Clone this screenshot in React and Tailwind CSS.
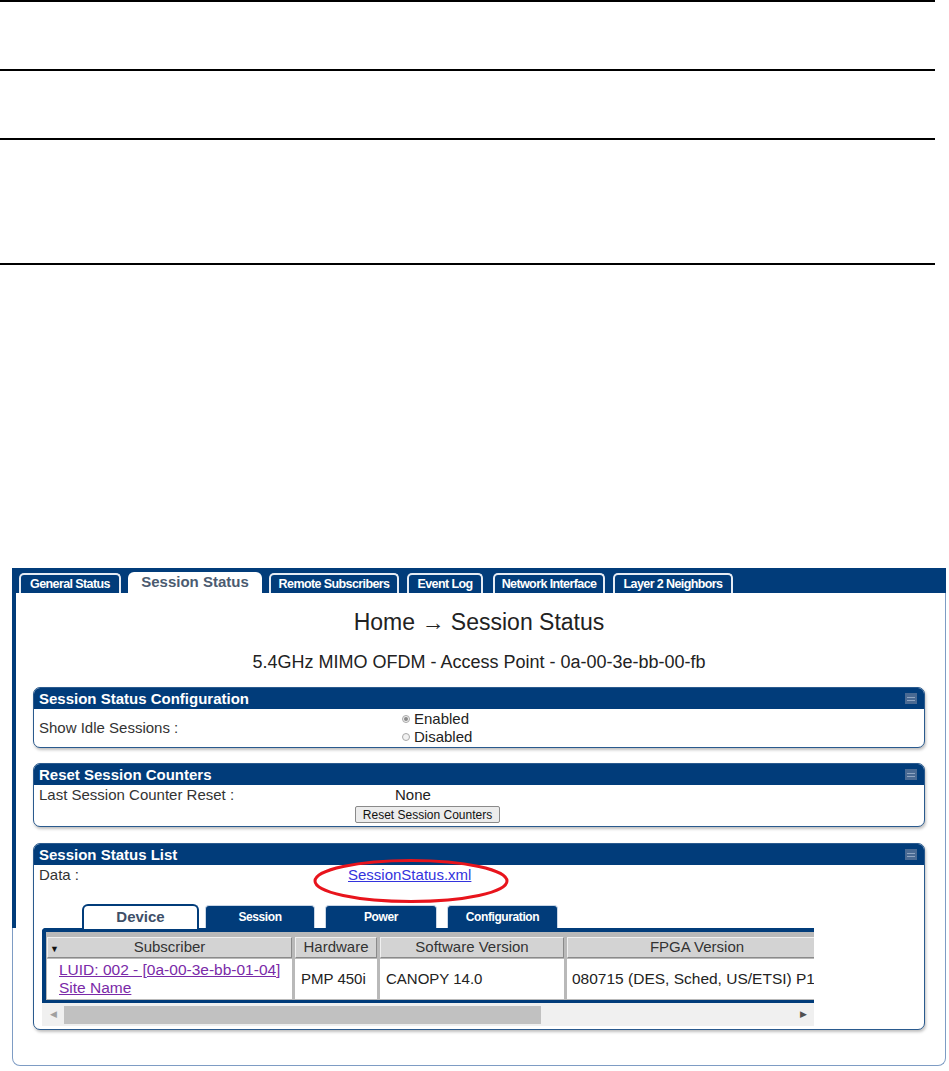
import { Fragment } from 'react'

const TOP_TABS = [
  { label: 'General Status',     w: 102, ml: 7 },
  { label: 'Session Status',     w: 134, ml: 7, active: true },
  { label: 'Remote Subscribers', w: 130, ml: 7 },
  { label: 'Event Log',          w: 76,  ml: 8 },
  { label: 'Network Interface',  w: 112, ml: 10 },
  { label: 'Layer 2 Neighbors',  w: 120, ml: 8 },
]

const SUB_TABS = [
  { label: 'Device',        w: 117, ml: 48, active: true },
  { label: 'Session',       w: 110, ml: 6 },
  { label: 'Power',         w: 112, ml: 10 },
  { label: 'Configuration', w: 111, ml: 10 },
]

const COLS = [
  { label: 'Subscriber',       w: 245 },
  { label: 'Hardware',         w: 82 },
  { label: 'Software Version', w: 184 },
  { label: 'FPGA Version',     w: 260 },
]

function Panel({ title, children }) {
  return (
    <div className="mx-[20px] rounded-[7px] border border-[#2a5a8e] bg-white shadow-[1px_2px_3px_rgba(0,0,0,0.25)] overflow-hidden">
      <div className="h-[21px] bg-[#013c7a] flex items-center justify-between pl-[5px] pr-[7px]">
        <span className="text-white text-[15px] font-bold leading-none">{title}</span>
        <span className="w-[12px] h-[11px] bg-[#4a6a93] flex flex-col justify-center items-center gap-[2px]">
          <span className="w-[8px] h-px bg-[#8fa5c2]" />
          <span className="w-[8px] h-px bg-[#8fa5c2]" />
        </span>
      </div>
      {children}
    </div>
  )
}

function Radio({ checked, label }) {
  return (
    <div className="flex items-center h-[18px] gap-[4px]">
      <span className="w-[8px] h-[8px] rounded-full border border-[#a8a8a8] bg-[#f2f2f2] flex items-center justify-center">
        {checked && <span className="w-[4px] h-[4px] rounded-full bg-[#8a8a8a]" />}
      </span>
      <span className="text-[15px] text-[#222]">{label}</span>
    </div>
  )
}

export default function App() {
  return (
    <div className="w-[949px] h-[1071px] bg-white overflow-hidden" style={{ fontFamily: '"Liberation Sans", Arial, sans-serif' }}>
      {/* page rules */}
      <div className="w-[935px] h-[2px] bg-black" />
      <div className="h-[67px]" />
      <div className="w-[935px] h-[2px] bg-black" />
      <div className="h-[67px]" />
      <div className="w-[935px] h-[2px] bg-black" />
      <div className="h-[123px]" />
      <div className="w-[935px] h-[2px] bg-black" />
      <div className="h-[303px]" />

      {/* screenshot frame */}
      <div className="ml-[12px] w-[934px]">
        <div className="h-[25px] bg-[#013c7a] flex items-end">
          {TOP_TABS.map(t => (
            <div
              key={t.label}
              style={{ width: t.w, marginLeft: t.ml }}
              className={
                t.active
                  ? 'h-[21px] rounded-t-[6px] bg-white flex items-center justify-center text-[15px] font-bold text-[#4b5b70]'
                  : 'h-[20px] rounded-t-[5px] border-2 border-b-0 border-[#e6ecf4] bg-[#013c7a] flex items-center justify-center text-[12.5px] font-bold tracking-[-0.6px] text-white whitespace-nowrap'
              }
            >
              {t.label}
            </div>
          ))}
        </div>

        <div className="relative h-[473px] border-x border-b border-[#7e9cc4] rounded-b-[8px]">
          <div className="absolute -left-px top-0 w-[4px] h-[335px] bg-[#013c7a]" />

          <div className="pt-[16px] text-center text-[23px] leading-[26px] text-[#222]">Home → Session Status</div>
          <div className="pt-[17px] text-center text-[18px] leading-[20px] text-[#222]">5.4GHz MIMO OFDM - Access Point - 0a-00-3e-bb-00-fb</div>

          <div className="h-[15px]" />
          <Panel title="Session Status Configuration">
            <div className="flex items-center h-[38px] pl-[5px]">
              <span className="w-[363px] text-[15px] text-[#333]">Show Idle Sessions :</span>
              <div className="flex flex-col">
                <Radio checked label="Enabled" />
                <Radio label="Disabled" />
              </div>
            </div>
          </Panel>

          <div className="h-[15px]" />
          <Panel title="Reset Session Counters">
            <div className="pl-[5px] pb-[1px]">
              <div className="flex items-center h-[21px]">
                <span className="w-[316px] text-[15px] text-[#333]">Last Session Counter Reset :</span>
                <span className="pl-[40px] text-[15px] text-[#222]">None</span>
              </div>
              <div className="flex h-[19px]">
                <span className="w-[316px]" />
                <button className="h-[17px] w-[145px] border border-[#8a8a8a] bg-[#ececec] rounded-[2px] text-[12px] text-[#111] leading-none whitespace-nowrap">Reset Session Counters</button>
              </div>
            </div>
          </Panel>

          <div className="h-[16px]" />
          <Panel title="Session Status List">
            <div className="relative">
              <div className="flex items-center h-[21px] pl-[5px]">
                <span className="w-[309px] text-[15px] text-[#333]">Data :</span>
                <span className="text-[15px] text-[#3333dd] underline">SessionStatus.xml</span>
              </div>
              <svg className="absolute left-[278px] top-[-7px]" width="198" height="46" viewBox="0 0 198 46">
                <ellipse cx="99" cy="23" rx="96" ry="20.5" fill="none" stroke="#e8141c" strokeWidth="3" />
              </svg>

              <div className="h-[18px]" />
              <div className="flex items-end h-[24px]">
                {SUB_TABS.map(t => (
                  <div
                    key={t.label}
                    style={{ width: t.w, marginLeft: t.ml }}
                    className={
                      t.active
                        ? 'h-[25px] -mb-[1px] rounded-t-[6px] border-2 border-b-0 border-[#013c7a] bg-white flex items-center justify-center text-[15px] font-bold text-[#3e4f69]'
                        : 'h-[23px] rounded-t-[4px] border border-b-0 border-[#c9d6e6] bg-[#013c7a] flex items-center justify-center text-[12px] font-bold tracking-[-0.4px] text-white'
                    }
                  >
                    {t.label}
                  </div>
                ))}
              </div>

              <div className="ml-[8px] w-[772px] overflow-hidden">
                <div className="border-t-[4px] border-l-[4px] border-b-[3px] border-[#013c7a] rounded-tl-[4px] bg-[#b9b9b9] pt-[5px] pl-[1px] pb-[1px]">
                  <div className="flex w-[900px]">
                    {COLS.map((c, i) => (
                      <div
                        key={c.label}
                        style={{ width: c.w }}
                        className="relative h-[21px] mr-[3px] bg-[#d3d3d3] border border-t-[#f0f0f0] border-l-[#f0f0f0] border-b-[#8a8a8a] border-r-[#8a8a8a] flex items-center justify-center text-[15px] text-[#333]"
                      >
                        {i === 0 && <span className="absolute left-[2px] top-[7px] text-[9px] leading-none text-[#111]">▼</span>}
                        {c.label}
                      </div>
                    ))}
                  </div>
                  <div className="flex w-[900px] mt-[1px]">
                    <div style={{ width: COLS[0].w }} className="mr-[3px] h-[40px] bg-white flex flex-col justify-center pl-[12px] text-[15.5px] leading-[18px] text-[#7a2aa8] whitespace-nowrap">
                      <span className="underline">LUID: 002 - [0a-00-3e-bb-01-04]</span>
                      <span className="underline">Site Name</span>
                    </div>
                    <div style={{ width: COLS[1].w }} className="mr-[3px] h-[40px] bg-white flex items-center pl-[6px] text-[15px] text-[#222]">PMP 450i</div>
                    <div style={{ width: COLS[2].w }} className="mr-[3px] h-[40px] bg-white flex items-center pl-[6px] text-[15px] text-[#222]">CANOPY 14.0</div>
                    <div style={{ width: COLS[3].w }} className="h-[40px] bg-white flex items-center pl-[5px] text-[15.5px] text-[#222] whitespace-nowrap">080715 (DES, Sched, US/ETSI) P1</div>
                  </div>
                </div>

                <div className="h-[23px] bg-[#f0f0f0] flex items-center">
                  <span className="w-[22px] flex justify-center text-[9px] text-[#a0a0a0]">◀</span>
                  <span className="w-[477px] h-[18px] bg-[#c1c1c1]" />
                  <span className="flex-1" />
                  <span className="w-[22px] flex justify-center text-[9px] text-[#505050]">▶</span>
                </div>
              </div>
              <div className="h-[3px]" />
            </div>
          </Panel>
        </div>
      </div>
    </div>
  )
}
